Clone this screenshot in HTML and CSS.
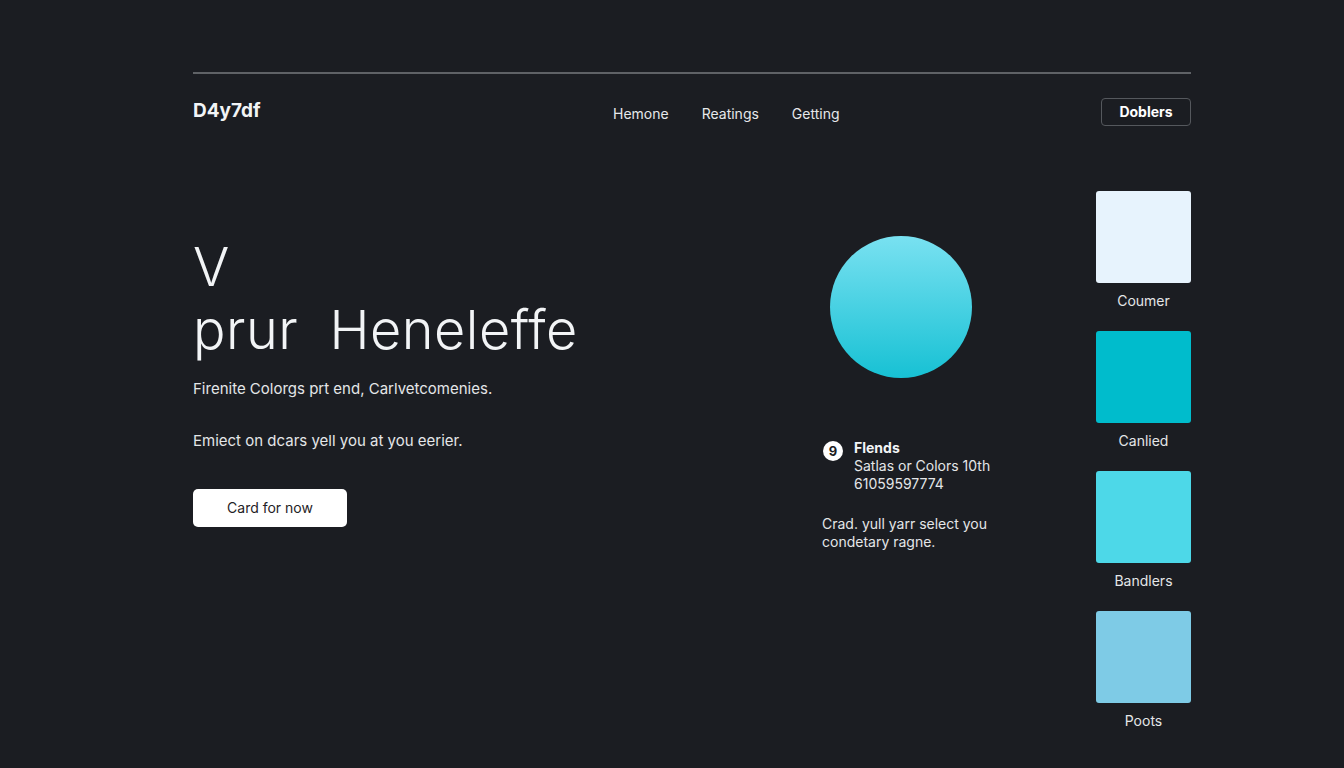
FILE: index.html
```html
<!DOCTYPE html>
<html>
<head>
  <meta charset="UTF-8">
  <title>D4y7df</title>
  <link rel="stylesheet" href="styles.css">
</head>
<body>
  <div class="page">

    <header class="topbar">
      <div class="logo">D4y7df</div>
      <nav class="links">
        <a href="#">Hemone</a>
        <a href="#">Reatings</a>
        <a href="#">Getting</a>
      </nav>
      <a href="#" class="outline-btn">Doblers</a>
    </header>

    <main class="content">
      <section class="hero">
        <h1>V<br>prur&nbsp; Heneleffe</h1>
        <p class="lead">Firenite Colorgs prt end, Carlvetcomenies.</p>
        <p class="sub">Emiect on dcars yell you at you eerier.</p>
        <a href="#" class="white-btn">Card for now</a>
      </section>

      <section class="middle">
        <div class="orb"></div>
        <div class="friend">
          <span class="num">9</span>
          <div>
            <strong>Flends</strong>
            <p>Satlas or Colors 10th</p>
            <p>61059597774</p>
          </div>
        </div>
        <p class="note">Crad. yull yarr select you<br>condetary ragne.</p>
      </section>

      <section class="swatches">
        <div class="swatch">
          <div class="chip chip-1"></div>
          <span>Coumer</span>
        </div>
        <div class="swatch">
          <div class="chip chip-2"></div>
          <span>Canlied</span>
        </div>
        <div class="swatch">
          <div class="chip chip-3"></div>
          <span>Bandlers</span>
        </div>
        <div class="swatch">
          <div class="chip chip-4"></div>
          <span>Poots</span>
        </div>
      </section>
    </main>

  </div>
</body>
</html>
```

FILE: styles.css
```css
body {
  margin: 0;
  background-color: #1b1d22;
  color: #f2f4f6;
  font-family: Inter, "Liberation Sans", sans-serif;
}

.page {
  width: 998px;
  padding: 72px 0 0 193px;
}

.topbar {
  display: flex;
  align-items: center;
  border-top: 2px solid #5f6266;
  padding-top: 24px;
  height: 28px;
}

.logo {
  font-size: 19px;
  font-weight: 700;
  width: 420px;
  margin-top: -3px;
}

.links {
  display: flex;
  gap: 33px;
  flex: 1;
  margin-top: 2px;
}

.links a {
  color: #e6e8ea;
  text-decoration: none;
  font-size: 14px;
}

.outline-btn {
  color: #fff;
  text-decoration: none;
  font-size: 14px;
  font-weight: 700;
  border: 1px solid #55585d;
  border-radius: 4px;
  width: 88px;
  height: 26px;
  line-height: 26px;
  text-align: center;
}

.content {
  display: grid;
  grid-template-columns: 629px 274px 95px;
  margin-top: 65px;
}

.hero {
  padding-top: 44px;
}

.hero h1 {
  margin: 0;
  font-size: 54px;
  font-weight: 300;
  line-height: 63px;
  letter-spacing: 0.5px;
}

.lead {
  margin: 18px 0 0;
  font-size: 15px;
  color: #e4e6e8;
}

.sub {
  margin: 33px 0 0;
  font-size: 15px;
  color: #e4e6e8;
}

.white-btn {
  display: inline-block;
  margin-top: 39px;
  width: 154px;
  height: 38px;
  line-height: 38px;
  text-align: center;
  background-color: #fff;
  color: #1f2226;
  text-decoration: none;
  font-size: 14px;
  border-radius: 5px;
}

.middle {
  padding-top: 45px;
}

.orb {
  width: 142px;
  height: 142px;
  margin-left: 8px;
  border-radius: 50%;
  background: linear-gradient(#79e1f1, #17c1d4);
}

.friend {
  display: flex;
  gap: 11px;
  margin-top: 61px;
  margin-left: 1px;
  font-size: 14px;
}

.friend strong {
  display: block;
  font-size: 14px;
  line-height: 18px;
}

.friend p {
  margin: 0;
  line-height: 18px;
  color: #e4e6e8;
}

.num {
  width: 20px;
  height: 20px;
  margin-top: 2px;
  border-radius: 50%;
  background-color: #fff;
  color: #1b1d22;
  font-size: 13px;
  font-weight: 700;
  text-align: center;
  line-height: 20px;
}

.note {
  margin: 22px 0 0;
  font-size: 14px;
  line-height: 18px;
  color: #e4e6e8;
}

.swatches {
  display: flex;
  flex-direction: column;
  gap: 22px;
}

.swatch {
  display: flex;
  flex-direction: column;
  align-items: center;
  gap: 9px;
  font-size: 14px;
  color: #e4e6e8;
}

.chip {
  width: 95px;
  height: 92px;
  border-radius: 3px;
}

.chip-1 { background-color: #e7f3fd; }
.chip-2 { background-color: #00bccc; }
.chip-3 { background-color: #4dd8e8; }
.chip-4 { background-color: #7ecbe6; }
```
